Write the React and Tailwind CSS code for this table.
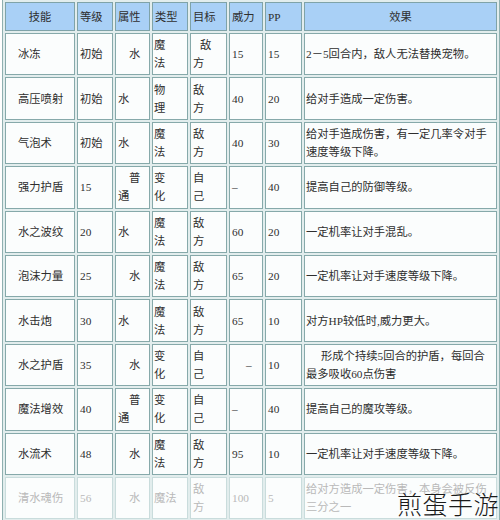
import React from 'react';

const IND1 = 'pl-[11px]';
const IND_HALF = 'pl-[7px]';
const IND_DASH = 'pl-[14px]';

// each cell: array of lines; a line is a string or [text, indentClass]
const rows = [
  ['冰冻', ['初始'], [['水', IND1]], ['魔', '法'], [['敌', IND_HALF], '方'], ['15'], ['15'], ['2－5回合内，敌人无法替换宠物。']],
  ['高压喷射', ['初始'], ['水'], ['物', '理'], ['敌', '方'], ['40'], ['20'], ['给对手造成一定伤害。']],
  ['气泡术', ['初始'], ['水'], ['魔', '法'], ['敌', '方'], ['40'], ['30'], ['给对手造成伤害，有一定几率令对手', '速度等级下降。']],
  ['强力护盾', ['15'], [['普', IND1], '通'], ['变', '化'], ['自', '己'], ['–'], ['40'], ['提高自己的防御等级。']],
  ['水之波纹', ['20'], ['水'], ['魔', '法'], ['敌', '方'], ['60'], ['20'], ['一定机率让对手混乱。']],
  ['泡沫力量', ['25'], [['水', IND1]], ['魔', '法'], ['敌', '方'], ['65'], ['20'], ['一定机率让对手速度等级下降。']],
  ['水击炮', ['30'], ['水'], ['魔', '法'], ['敌', '方'], ['65'], ['10'], ['对方HP较低时,威力更大。']],
  ['水之护盾', ['35'], [['水', IND1]], ['变', '化'], ['自', '己'], [['–', IND_DASH]], ['10'], [['形成个持续5回合的护盾，每回合', 'pl-[15px]'], '最多吸收60点伤害']],
  ['魔法增效', ['40'], [['普', IND1], '通'], ['变', '化'], ['自', '己'], ['–'], ['40'], ['提高自己的魔攻等级。']],
  ['水流术', ['48'], [['水', IND1]], ['魔', '法'], ['敌', '方'], ['95'], ['10'], ['一定机率让对手速度等级下降。']],
  ['清水魂伤', ['56'], [['水', IND1]], ['魔法'], ['敌', '方'], ['100'], ['5'], ['给对方造成一定伤害，本身会被反伤', '三分之一']],
];

const headers = ['技能', '等级', '属性', '类型', '目标', '威力', 'PP', '效果'];
const widths = ['w-[70px]', 'w-[36px]', 'w-[35px]', 'w-[36px]', 'w-[37px]', 'w-[34px]', 'w-[37px]', 'w-[193px]'];

function Lines({ lines }) {
  return lines.map((ln, i) =>
    Array.isArray(ln) ? (
      <div key={i} className={ln[1]}>{ln[0]}</div>
    ) : (
      <div key={i}>{ln}</div>
    )
  );
}

export default function App() {
  return (
    <div className="relative w-[500px] h-[520px] overflow-hidden bg-white font-['Liberation_Serif','Noto_Sans_CJK_SC',serif] text-[11.3px] leading-[18px] text-[#2e2e2e]">
      <table className="table-fixed w-[498px] ml-[2px] mt-[-1px] border-separate border-spacing-[2px] border border-[#8fb0b0] bg-[#e2eded]">
        <thead>
          <tr>
            {headers.map((h, i) => (
              <th
                key={h}
                className={`${widths[i]} h-[29px] p-0 font-normal border border-[#7fa3a8] bg-[#a9d0f6] align-middle ${
                  i === 0 || i === 7 ? 'text-center' : 'text-left pl-[2px]'
                }`}
              >
                {h}
              </th>
            ))}
          </tr>
        </thead>
        <tbody>
          {rows.map((r, ri) => {
            const faded = ri === rows.length - 1;
            const cell = `h-[42.4px] p-0 align-middle border bg-[#fbfdfd] ${
              faded ? 'border-[#c9dcdc] text-[#b9b9b9]' : 'border-[#86a9aa]'
            }`;
            return (
              <tr key={ri}>
                <td className={`${cell} pl-[12px]`}>{r[0]}</td>
                <td className={`${cell} pl-[2px]`}><Lines lines={r[1]} /></td>
                <td className={`${cell} pl-[2px]`}><Lines lines={r[2]} /></td>
                <td className={`${cell} pl-[1px]`}><Lines lines={r[3]} /></td>
                <td className={`${cell} pl-[2px]`}><Lines lines={r[4]} /></td>
                <td className={`${cell} pl-[2px]`}><Lines lines={r[5]} /></td>
                <td className={`${cell} pl-[2px]`}><Lines lines={r[6]} /></td>
                <td className={`${cell} pl-[1px]`}><Lines lines={r[7]} /></td>
              </tr>
            );
          })}
        </tbody>
      </table>

      <div className="absolute right-[1px] bottom-[3px] font-['Noto_Sans_CJK_SC',sans-serif] font-light text-[25px] leading-[28px] tracking-[0.5px] text-[#1a1a1a]">
        煎蛋手游
      </div>
    </div>
  );
}
